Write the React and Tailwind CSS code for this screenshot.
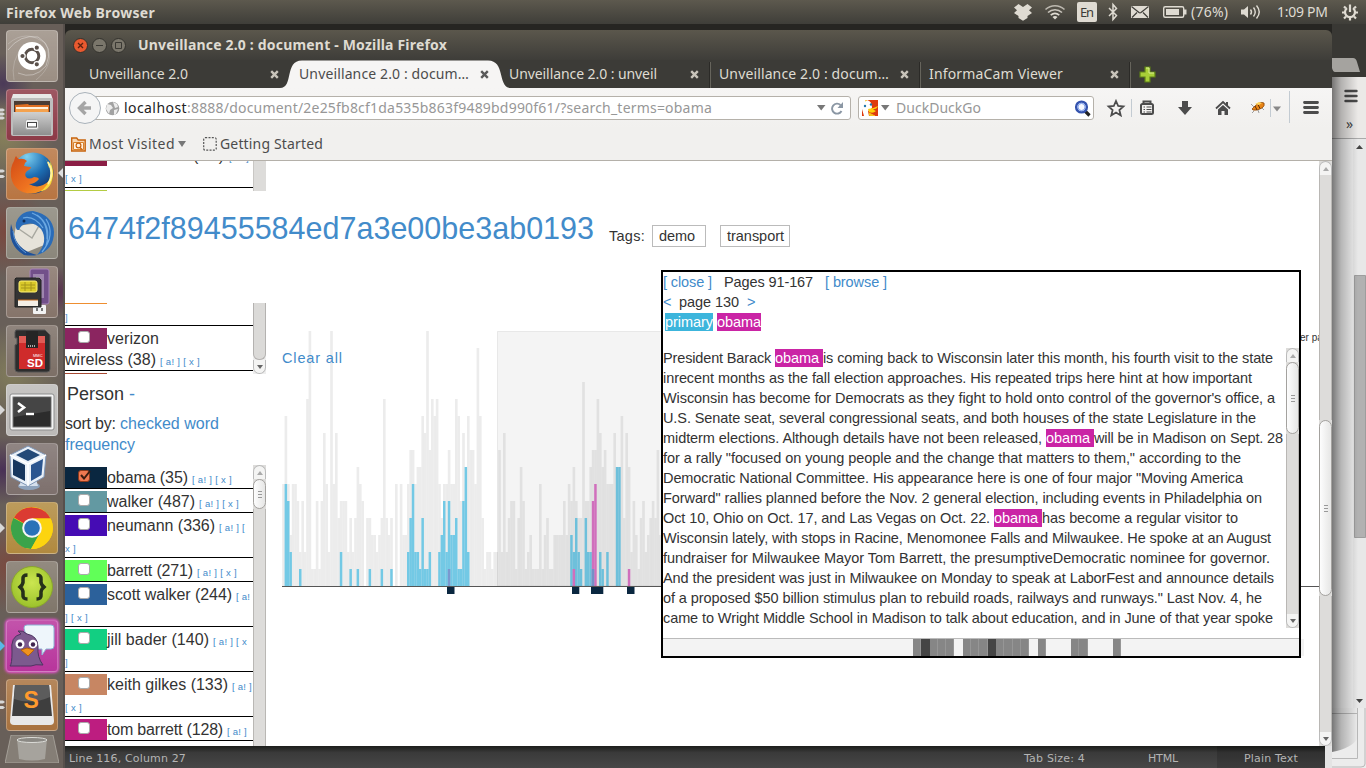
import React, { useLayoutEffect, useRef, useState } from "react";

/* Text run stretched or tightened to an exact advance width. */
function Fit({ w, className = "", children }) {
  const ref = useRef(null);
  const [ls, setLs] = useState(0);
  useLayoutEffect(() => {
    const natural = ref.current.getBoundingClientRect().width;
    setLs((w - natural) / children.length);
  }, []);
  return (
    <span ref={ref} className={"inline-block whitespace-pre " + className} style={{ letterSpacing: ls + "px" }}>
      {children}
    </span>
  );
}

/* ---------- top panel ---------- */
function TopPanel() {
  return (
    <header className="flex h-6 w-full shrink-0 items-center bg-linear-to-b from-[#5d594e] to-[#3f3e39] font-['Noto_Sans','Open_Sans',sans-serif] text-[#dfdbd2]">
      <div className="w-[1013px] pl-[6px] leading-6">
        <Fit w={149} className="text-[14px] font-bold">Firefox Web Browser</Fit>
      </div>
      <svg width="353" height="24" viewBox="1013 0 353 24" fill="#dfdbd2" className="font-['Noto_Sans',sans-serif] text-[14px]">
        <path d="M1018.500 4l4.500 3 4.500-3 4.500 3.500-3 2.700 3 2.800-4.500 3v2l-4.500 2.800-4.500-2.800v-2l-4.500-3 3-2.800-3-2.700z" />
        <g fill="none" stroke="#dfdbd2">
          <path d="M1045.500 9.500c5.500-5 13.500-5 19 0" strokeWidth="1.600" opacity=".75" />
          <path d="M1048 12.500c4-3.700 10-3.700 14 0" strokeWidth="1.600" opacity=".85" />
          <path d="M1050.700 15.200c2.500-2.200 6-2.200 8.600 0" strokeWidth="1.600" />
          <path d="M1109 8l7.500 7.500-3.500 4V4.500l3.500 4-7.500 7.500" strokeWidth="1.500" />
        </g>
        <path d="M1052.500 17c1.500-1.500 3.500-1.500 5 0l-2.500 2.500z" />
        <rect x="1077" y="2" width="20" height="20" rx="2" />
        <text x="1080" y="17" fontSize="13" fill="#3c3b37" textLength="14">En</text>
        <rect x="1131" y="6" width="18" height="12" />
        <path d="M1131.500 6.500l7.500 6q1 .7 2 0l7.500-6M1132 17.500l5-5M1148 17.500l-5-5" fill="none" stroke="#3f3e39" strokeWidth="1.200" />
        <rect x="1163.700" y="6.700" width="20" height="10.600" rx="1.500" fill="none" stroke="#dfdbd2" strokeWidth="1.400" />
        <rect x="1166" y="9" width="13" height="6" />
        <path d="M1184 9.500h2.500v5h-2.500z" />
        <text x="1191" y="17" fontSize="14" textLength="37">(76%)</text>
        <path d="M1241 9.500h3l4-3.500v12l-4-3.500h-3z" />
        <path d="M1250.500 9.500q2 2.500 0 5M1253.500 7.500q3.500 4.500 0 9M1256.500 5.500q5.500 6.500 0 13" fill="none" stroke="#dfdbd2" strokeWidth="1.400" />
        <text x="1277" y="17" fontSize="14" textLength="51">1:09 PM</text>
        <path d="M1347 8.200a5 5 0 1 0 6 0" fill="none" stroke="#dfdbd2" strokeWidth="2.200" />
        <path d="M1350 4.500v7.500M1344 6.500l1.800 1.800M1356 6.500l-1.800 1.800M1342 12.500h3M1355 12.500h3M1344 18.500l2-2M1356 18.500l-2-2M1350 17.500v3" fill="none" stroke="#dfdbd2" strokeWidth="2.200" />
      </svg>
    </header>
  );
}

/* ---------- launcher ---------- */
function UbuntuIcon() {
  return (
    <g>
      <path d="M2 20Q14 4 32 7Q48 16 40 36Q28 50 12 43" fill="none" stroke="#fff" strokeOpacity=".35" strokeWidth="1" />
      <path d="M2 14Q20 -2 40 14Q50 34 30 50M8 50Q4 30 18 16" fill="none" stroke="#fff" strokeOpacity=".2" />
      <circle cx="26" cy="26" r="14" fill="#fff" />
      <circle cx="26" cy="26" r="6.800" fill="none" stroke="#5a504a" strokeWidth="3" />
      <g stroke="#fff" strokeWidth="1.200" fill="#5a504a">
        <circle cx="16.500" cy="26" r="2.700" />
        <circle cx="30.800" cy="17.700" r="2.700" />
        <circle cx="30.800" cy="34.300" r="2.700" />
      </g>
    </g>
  );
}
function FilesIcon() {
  return (
    <g>
      <path d="M7 5h38l2 6H5z" fill="#e8e8e8" />
      <rect x="5" y="9" width="42" height="38" rx="2" fill="#bdbdbd" />
      <rect x="8" y="12" width="36" height="11" fill="#4a3c35" />
      <path d="M9 16l13-1 1 1h20v7H9z" fill="#e06f22" />
      <path d="M10 18h32v4H10z" fill="#fff0dd" />
      <path d="M10 20h32v3H10z" fill="#f4a24e" />
      <path d="M7 23h38v23H7z" fill="url(#lgGrey)" />
      <rect x="19.500" y="30.500" width="13" height="10" rx="2" fill="#eee" stroke="#aaa" />
      <rect x="21.500" y="33.500" width="9" height="4.500" fill="#fff" stroke="#444" />
    </g>
  );
}
function FirefoxIcon() {
  return (
    <g>
      <circle cx="27" cy="25" r="20.500" fill="url(#lgSea)" />
      <path d="M38 9C49 20 46 38 31 43C44 46 52 28 44 13Q45 18 43 20Q42 13 38 9z" fill="#fbd83a" />
      <path d="M8 13Q9 9 10 8Q11 10 13 11Q18 10 21 13Q18 15 18 18Q22 19 25 19Q25 21 21 23Q18 26 20 29Q23 32 28 29Q32 29 33 31Q29 36 23 36Q33 42 43 33Q37 46 24 45.500Q8 44 5 29Q4 19 8 13z" fill="url(#lgFox)" />
      <path d="M42 14Q49 26 42 36" fill="none" stroke="#fff3a0" strokeWidth="2" />
    </g>
  );
}
function ThunderbirdIcon() {
  return (
    <g>
      <path d="M10 19l24-3 9 20-22 9-14-10z" fill="#e6e3da" />
      <path d="M10 20l16 11 8-14" fill="none" stroke="#a8a8a0" strokeWidth="1.500" />
      <path d="M10 16Q14 4 27 4Q47 8 48 25Q48 43 31 48Q43 34 35 22Q28 15 21 17Q15 17 13 23Q9 24 10 16z" fill="#2a6cb8" />
      <path d="M17 11Q28 8 37 21M31 8Q46 18 40 39M40 12Q50 28 36 45M26 6Q42 12 41 32" fill="none" stroke="#6ba8e2" strokeWidth="1.200" />
      <path d="M5 17Q1 38 18 48Q26 49 31 48Q14 44 9 31z" fill="#1f529b" />
      <path d="M7 24Q8 38 20 46" fill="none" stroke="#5e96d2" />
      <circle cx="18" cy="14" r="1.500" fill="#0f2c57" />
    </g>
  );
}
function SaveDrivesIcon() {
  return (
    <g>
      <rect x="24" y="3" width="19" height="35" rx="2" fill="#72508a" stroke="#a583b8" />
      <rect x="27" y="8" width="11" height="24" fill="#9e85ae" />
      <rect x="30" y="11" width="3" height="8" fill="#ddd" />
      <rect x="27" y="39" width="13" height="9" rx="1" fill="#f2f2f2" />
      <path d="M30 42h2v3h-2zM35 42h2v3h-2z" fill="#777" />
      <path d="M10 12h23l2 2v27H9V13z" fill="#343434" stroke="#222" />
      <rect x="13" y="15" width="18" height="11" rx="2" fill="#d9c92a" stroke="#fff176" />
      <path d="M15 19h14M15 22h14M19 16v9M25 16v9" stroke="#a6951b" />
      <rect x="12" y="34" width="20" height="6" fill="#f5efe6" />
      <path d="M12 34h20" stroke="#c66d21" />
    </g>
  );
}
function SdIcon() {
  return (
    <g>
      <path d="M10 5h29l5 5v34q0 3-3 3H12q-3 0-3-3V20l2-1v-6H9V7z" fill="#2d2d2d" stroke="#555" />
      <rect x="13" y="11" width="26" height="33" fill="#cf2b2b" />
      <path d="M13 11h7v7h-7zM32 11h7v7h-7z" fill="#df5b55" />
      <path d="M20 6h12v17H20z" fill="#252525" />
      <path d="M22 21h8" stroke="#aaa" strokeDasharray="1 1" strokeWidth="2" />
      <text x="27" y="32" fontSize="4" fill="#fff">MMC</text>
      <text x="21" y="42" fontSize="11.500" fontWeight="bold" fill="#fff">SD</text>
    </g>
  );
}
function TerminalIcon() {
  return (
    <g>
      <rect x="4" y="10" width="44" height="36" rx="2" fill="#f4f4f4" stroke="#8d8d8d" />
      <rect x="7" y="13" width="38" height="30" fill="#2c2c2c" stroke="#777" />
      <path d="M8 14h36v13L8 33z" fill="#454545" />
      <path d="M12 19l6 4.500-6 4.500" fill="none" stroke="#fff" strokeWidth="2.600" />
      <path d="M20 30h8" stroke="#fff" strokeWidth="2.400" />
    </g>
  );
}
function VirtualBoxIcon() {
  return (
    <g>
      <ellipse cx="23" cy="43" rx="11" ry="4" fill="#8ea3bc" />
      <path d="M16 36h14l2 7H13z" fill="#d6e0ec" />
      <path d="M22 3l18 9-2 22-16 9-17-9-1-22z" fill="#e9f0f8" stroke="#7d95b5" />
      <path d="M22 6l12 6-12 6-12-6z" fill="#244a78" />
      <path d="M7 16l12 6v16l-12-6z" fill="#17375f" />
      <path d="M25 22l12-6-1.500 16L25 38z" fill="#2b5690" />
      <path d="M4 12l18 9 18-9M22 21v22" fill="none" stroke="#fff" strokeWidth="1.500" />
    </g>
  );
}
function ChromeIcon() {
  return (
    <g>
      <circle cx="26" cy="26" r="21" fill="#fcd009" />
      <path d="M26 26L8 15.500A21 21 0 0 1 44.500 16.500H26z" fill="#db3b32" />
      <path d="M26 26L7.500 16A21 21 0 0 0 25 47l9-16z" fill="#3aa34a" />
      <path d="M26 16.500H44.500A21 21 0 0 1 25 47l9-16z" fill="#fcd40f" />
      <circle cx="26" cy="26" r="9.800" fill="#f5f5f5" />
      <circle cx="26" cy="26" r="7.800" fill="#2a72b8" />
    </g>
  );
}
function BracesIcon() {
  return (
    <g>
      <circle cx="26" cy="26" r="20.500" fill="url(#lgLime)" stroke="#8aa52d" />
      <path d="M21.500 14q-5 0-4.500 4t-1 6l-2 2 2 2q1.500 2 1 6t4.500 4M30.500 14q5 0 4.500 4t1 6l2 2-2 2q-1.500 2-1 6t-4.500 4" fill="none" stroke="#26301a" strokeWidth="3.600" />
    </g>
  );
}
function PidginIcon() {
  return (
    <g>
      <path d="M18 8q0-3 3-3h24q3 0 3 3v18q0 3-3 3h-5l-4 6 0-6H23z" fill="#eef6fb" stroke="#8cb6d6" />
      <path d="M4 46q2-2 2-14Q4 16 15 14l-3-3q5-1 9 3Q32 16 32 27q-1 10 5 18-8-1-12 1-10 0-21 0z" fill="#7c5a8e" stroke="#4d3561" />
      <circle cx="14" cy="24" r="4.500" fill="#fff" /><circle cx="27" cy="24" r="4.300" fill="#fff" />
      <circle cx="14" cy="24.500" r="2.200" fill="#40254f" /><circle cx="27" cy="24.500" r="2.200" fill="#40254f" />
      <path d="M15 30l6-2 7 2-6 6z" fill="#f0921e" stroke="#b5600d" />
    </g>
  );
}
function SublimeIcon() {
  return (
    <g>
      <path d="M7 6h38l3 36q0 4-4 4H8q-4 0-4-4z" fill="#e8e8e8" />
      <path d="M9 6h34l3 31H6z" fill="#3e3e3e" />
      <path d="M9 6h34l1 12Q26 26 8 20z" fill="#5c5c5c" />
      <text x="17.500" y="29" fontSize="23" fontWeight="bold" fill="#ff9a2e">S</text>
    </g>
  );
}

const LAUNCHER = [
  { Icon: UbuntuIcon, bg: "bg-[#9b8f84]" },
  { Icon: FilesIcon, bg: "bg-[#8d3a47]", pips: 3 },
  { Icon: FirefoxIcon, bg: "bg-[#b87542]", pips: 2, active: true },
  { Icon: ThunderbirdIcon, bg: "bg-[#8b877b]" },
  { Icon: SaveDrivesIcon, bg: "bg-[#86746a]" },
  { Icon: SdIcon, bg: "bg-[#7c6f66]" },
  { Icon: TerminalIcon, bg: "bg-[#bcbab8]", pips: 1 },
  { Icon: VirtualBoxIcon, bg: "bg-[#7d706d]" },
  { Icon: ChromeIcon, bg: "bg-[#b18a3f]", pips: 1 },
  { Icon: BracesIcon, bg: "bg-[#80766a]" },
  { Icon: PidginIcon, bg: "bg-[#b8359c] shadow-[0_0_3px_1px_#f050d8]", pips: 1, blue: true },
  { Icon: SublimeIcon, bg: "bg-[#a8723f]", pips: 2 },
];

function Launcher() {
  return (
    <nav className="relative flex h-[744px] w-[65px] shrink-0 flex-col items-center gap-[7px] overflow-hidden border-r-2 border-[#57504c] bg-[#685f59] bg-[radial-gradient(circle_at_5%_8%,#4b3a58_0,transparent_30px),radial-gradient(circle_at_8%_15%,#87805a_0,transparent_50px),radial-gradient(circle_at_10%_28%,#79483f_0,transparent_45px),radial-gradient(circle_at_90%_36%,#58304f_0,transparent_26px),radial-gradient(circle_at_20%_47%,#817c5b_0,transparent_50px),radial-gradient(circle_at_5%_60%,#493056_0,transparent_34px),radial-gradient(circle_at_15%_73%,#7a4a3f_0,transparent_46px),radial-gradient(circle_at_20%_89%,#81604b_0,transparent_45px)] pt-[6px]">
      <svg width="0" height="0" className="absolute">
        <defs>
          <linearGradient id="lgGrey" x1="0" y1="0" x2="0" y2="1"><stop offset="0" stopColor="#d0d0d0" /><stop offset="1" stopColor="#8e8e8e" /></linearGradient>
          <linearGradient id="lgFox" x1="0" y1="0" x2="1" y2="1"><stop offset="0" stopColor="#d14a16" /><stop offset=".6" stopColor="#ee7220" /><stop offset="1" stopColor="#f7a427" /></linearGradient>
          <radialGradient id="lgSea" cx=".35" cy=".1" r=".8"><stop offset="0" stopColor="#7ed0f0" /><stop offset=".6" stopColor="#1d6fb4" /><stop offset="1" stopColor="#153f7d" /></radialGradient>
          <radialGradient id="lgLime" cx=".5" cy=".4" r=".6"><stop offset="0" stopColor="#cbe650" /><stop offset="1" stopColor="#9cc22b" /></radialGradient>
        </defs>
      </svg>
      {LAUNCHER.map(({ Icon, bg, pips = 0, active, blue }, i) => (
        <div key={i} className="relative flex h-[52px] w-full shrink-0 justify-center">
          <div className={"h-[52px] w-[52px] rounded-[4px] border border-white/25 bg-linear-to-b from-white/15 to-transparent " + bg}>
            <svg width="52" height="52" viewBox="0 0 52 52" className="-mt-px -ml-px font-['Liberation_Sans',sans-serif]"><Icon /></svg>
          </div>
          <svg width="6" height="24" viewBox="0 0 6 24" className="absolute top-[14px] left-0" fill={blue ? "#58b9e8" : "#d8d8d8"}>
            {pips === 1 && <path d="M0 7l5 5-5 5z" />}
            {pips === 2 && <path d="M0 7.500h3l2 1.500-2 1.500H0zM0 13h3l2 1.500-2 1.500H0z" />}
            {pips === 3 && <path d="M0 5.500h3l2 1.500-2 1.500H0zM0 9.500h3l2 1.500-2 1.500H0zM0 13.500h3l2 1.500-2 1.500H0z" />}
          </svg>
          {active && <svg width="5" height="10" className="absolute top-[20px] right-0" fill="#e0e0e0"><path d="M5 0v10L0 5z" /></svg>}
        </div>
      ))}
      <svg width="54" height="28" viewBox="0 0 54 28" className="-mt-[3px] ml-[1px] shrink-0">
        <path d="M6 0h42l6 28H0z" fill="#a8a49a" fillOpacity=".45" stroke="#c0bdb4" strokeOpacity=".6" />
        <path d="M12 4l2 20q13 3 26 0l2-20z" fill="#bdbdb8" fillOpacity=".6" />
        <ellipse cx="27" cy="5" rx="15" ry="2.500" fill="#8b8984" stroke="#dcdcd8" />
      </svg>
    </nav>
  );
}

/* ---------- browser chrome ---------- */
function TitleBar() {
  const ring = "flex h-[15px] w-[15px] items-center justify-center rounded-full border border-[#33322d]";
  return (
    <div className="flex h-[30px] items-center bg-linear-to-b from-[#5b574c] to-[#3e3d39] pl-[8px]">
      <div className="flex gap-[4px]">
        <div className={ring + " bg-[#e9592f]"}><svg width="7" height="7"><path d="M1 1l5 5M6 1l-5 5" stroke="#5c2210" strokeWidth="1.300" /></svg></div>
        <div className={ring + " bg-[#7a766b]"}><svg width="7" height="7"><path d="M0 3.500h7" stroke="#3a3934" /></svg></div>
        <div className={ring + " bg-[#7a766b]"}><svg width="7" height="7"><path d="M.5.500h6v6h-6z" fill="none" stroke="#3a3934" /></svg></div>
      </div>
      <div className="ml-[12px] text-[14px] leading-[28px] font-bold text-[#dfdbd2]"><Fit w={309}>Unveillance 2.0 : document - Mozilla Firefox</Fit></div>
    </div>
  );
}

const TABS = [
  { t: "Unveillance 2.0", w: 99 },
  { t: "Unveillance 2.0 : docum…", w: 170, on: true },
  { t: "Unveillance 2.0 : unveil", w: 148, sep: true },
  { t: "Unveillance 2.0 : docum…", w: 170, sep: true },
  { t: "InformaCam Viewer", w: 134, sep: true },
];
function TabStrip() {
  return (
    <div className="flex h-[28px] items-center bg-[#3c3b37] pl-[14px]">
      {TABS.map((tab, i) => (
        <div key={i} className="relative flex h-[28px] w-[210px] items-center justify-between pr-[10px] pl-[10px]">
          {tab.on && (
            <svg width="234" height="28" viewBox="0 0 234 28" className="absolute top-0 left-[-10px]">
              <path d="M1 28C15 28 5 .500 23 .500H209C227 .500 218 28 232 28z" fill="#f6f5f4" />
            </svg>
          )}
          <span className={"relative text-[14px] leading-[28px] " + (tab.on ? "text-[#4c4c4c]" : "text-[#dfdbd2]")}><Fit w={tab.w}>{tab.t}</Fit></span>
          <svg width="9" height="9" className="relative"><path d="M1.200 1.200l6.600 6.600M7.800 1.200l-6.600 6.600" stroke={tab.on ? "#5a5a5a" : "#c8c4ba"} strokeWidth="2.400" /></svg>
          {tab.sep && <div className="absolute top-[2px] right-[-2px] h-[26px] w-[2px] border-x border-l-[#2b2a27] border-r-[#66645c]" />}
        </div>
      ))}
      <svg width="17" height="17" viewBox="0 0 17 17" className="ml-[10px]"><path d="M6 1h5v5h5v5h-5v5H6v-5H1V6h5z" fill="#a8cf38" stroke="#5d8018" strokeWidth="1.200" /><path d="M7 2h3v5h5" fill="none" stroke="#d9ee8f" /></svg>
    </div>
  );
}

function NavBar() {
  return (
    <div className="flex h-[40px] items-center bg-linear-to-b from-[#f6f5f4] to-[#f1f0ee]">
      <div className="z-10 ml-[4px] flex h-[32px] w-[32px] items-center justify-center rounded-full border border-[#a9b2ba] bg-[#f5f5f5]">
        <svg width="16" height="16" viewBox="0 0 16 16"><path d="M14 8H3M8.500 2L2.500 8l6 6" fill="none" stroke="#a5a5a5" strokeWidth="3.400" /></svg>
      </div>
      <div className="ml-[-14px] flex h-[24px] w-[764px] items-center rounded-r-[3px] border border-[#b5b1aa] bg-white pr-[5px] pl-[17px]">
        <svg width="15" height="15" viewBox="0 0 15 15"><circle cx="7.500" cy="7.500" r="6.800" fill="#a2a2a2" /><path d="M2 3l4 1 2 3-3 2-1 4-3-5zM8 1l4 2 1 3-3 1zM9 9l4-1-2 5-2 1z" fill="#ececec" /></svg>
        <div className="ml-[4px] flex w-[690px] text-[14px] leading-[22px]">
          <Fit w={63} className="text-[#222]">localhost</Fit>
          <Fit w={525} className="text-[#979797]">:8888/document/2e25fb8cf1da535b863f9489bd990f61/?search_terms=obama</Fit>
        </div>
        <svg width="9" height="6" className="ml-auto"><path d="M0 0h8.500L4.200 5.500z" fill="#777" /></svg>
        <svg width="13" height="13" viewBox="0 0 13 13" className="ml-[5px] mr-px"><path d="M10.500 9A5 5 0 1 1 9.500 3" fill="none" stroke="#8b97a4" strokeWidth="1.900" /><path d="M12 0v6H6.500z" fill="#8b97a4" /></svg>
      </div>
      <div className="ml-[7px] flex h-[24px] w-[236px] items-center rounded-[3px] border border-[#b5b1aa] bg-white pr-[2px] pl-[3px]">
        <svg width="16" height="16" viewBox="0 0 16 16"><path d="M0 0h16v16H0z" fill="#de3a0e" /><path d="M0 0h5q5 1 5 8l-4 3 1 5H2L0 9z" fill="#fff" /><path d="M6 9q5 0 10-3-1 3-5 3.500l3 1.500q-3 3-7 1z" fill="#fdd20a" /><circle cx="3" cy="6" r="1.200" fill="#2277aa" /><circle cx="9" cy="4.500" r="1.200" fill="#2277aa" /><path d="M3 1l2-1M7 13l1 3h5z" stroke="#f7c21c" fill="#f7c21c" /></svg>
        <svg width="9" height="6" className="ml-[3px]"><path d="M0 0h8.500L4.200 5.500z" fill="#777" /></svg>
        <span className="ml-[6px] text-[14px] leading-[22px] text-[#979797]"><Fit w={85}>DuckDuckGo</Fit></span>
        <svg width="17" height="17" viewBox="0 0 17 17" className="ml-auto"><path d="M11 11l4.500 4.500" stroke="#222" strokeWidth="3.200" /><circle cx="7.500" cy="7" r="5.400" fill="#dfe9ff" stroke="#3453ae" strokeWidth="2.400" /><circle cx="7.500" cy="7" r="3.600" fill="#f5f8ff" stroke="#7a9be8" /></svg>
      </div>
      <svg width="237" height="40" viewBox="1094 88 237 40" className="shrink-0">
        <path d="M1116 101l2.200 5 5.200.500-4 3.600 1.300 5.300-4.700-2.900-4.700 2.900 1.300-5.300-4-3.600 5.200-.500z" fill="none" stroke="#4c4c4c" strokeWidth="1.800" />
        <path d="M1131.500 99v18M1270.500 99v18M1289.500 91v32" stroke="#c3cbd2" />
        <rect x="1141" y="104" width="12" height="10" rx="1.500" fill="none" stroke="#4c4c4c" strokeWidth="2" />
        <path d="M1143.500 104v-2.500h7v2.500" fill="none" stroke="#4c4c4c" strokeWidth="2" />
        <path d="M1143.500 107h1.500M1146.500 107h5M1143.500 109.500h1.500M1146.500 109.500h5M1143.500 112h1.500M1146.500 112h5" stroke="#4c4c4c" strokeWidth="1" />
        <path d="M1182 101h6v6h4l-7 8-7-8h4z" fill="#4c4c4c" />
        <path d="M1216 108.500l7-6.500 7 6.500" fill="none" stroke="#4c4c4c" strokeWidth="1.800" />
        <path d="M1218 109.500l5-4.500 5 4.500v5.500h-3.500v-4h-3v4h-3.500zM1226 102h2v4h-2z" fill="#4c4c4c" />
        <path d="M1252 109l3-3q5-5 9-3 1 3-2 5-5 3-9 2z" fill="#e88415" stroke="#8a4508" strokeWidth=".8" />
        <path d="M1255 106l2 4M1258 104.500l2 4" stroke="#5b2a05" />
        <path d="M1255 104l4-2 3 1-3 2z" fill="#ffd45e" />
        <path d="M1251 104l3 3M1254 111l-2 2M1258 110l1 3M1262 108l2 2" stroke="#888" strokeWidth=".8" />
        <path d="M1273 106.500h8l-4 5z" fill="#888" />
        <path d="M1304.500 102.500h13M1304.500 107.500h13M1304.500 112.500h13" stroke="#4c4c4c" strokeWidth="2.800" strokeLinecap="round" />
      </svg>
    </div>
  );
}

function BookmarksBar() {
  return (
    <div className="flex h-[33px] items-center border-b border-[#b4b0a9] bg-[#f1f0ee] pl-[6px] text-[14px] leading-[32px] text-[#4c4c4c]">
      <svg width="15" height="15" viewBox="0 0 15 15"><path d="M.7 1h5l1.500 2h7v11H.700z" fill="#f6d5b0" stroke="#c8640e" strokeWidth="1.400" /><path d="M2.500 5.500h10v7h-10z" fill="#fff0df" stroke="#d9822b" /><circle cx="7.500" cy="8.500" r="2.400" fill="none" stroke="#c8640e" strokeWidth="1.200" /><path d="M9 10.500l2 2" stroke="#c8640e" strokeWidth="1.400" /></svg>
      <span className="ml-[3px]"><Fit w={86}>Most Visited</Fit></span>
      <svg width="8" height="6" className="ml-[3px]"><path d="M0 0h8L4 6z" fill="#777" /></svg>
      <svg width="14" height="14" className="ml-[17px]"><rect x=".7" y=".7" width="12.500" height="12.500" rx="1.500" fill="none" stroke="#555" strokeWidth="1.200" strokeDasharray="2 1.300" /></svg>
      <span className="ml-[3px]"><Fit w={103}>Getting Started</Fit></span>
    </div>
  );
}

/* ---------- scrollbars ---------- */
function Grip() {
  return <div className="flex flex-col gap-[2px]"><i className="h-px w-[4px] bg-[#999]" /><i className="h-px w-[4px] bg-[#999]" /><i className="h-px w-[4px] bg-[#999]" /></div>;
}
function Arrow({ up }) {
  return (
    <div className={"flex h-[14px] shrink-0 items-center justify-center border border-[#bbb] bg-[#f4f4f3] " + (up ? "rounded-t-[7px] border-b-0" : "rounded-b-[7px] border-t-0")}>
      <svg width="6" height="4"><path d={up ? "M0 4h6L3 0z" : "M0 0h6L3 4z"} fill={up ? "#aaa" : "#666"} /></svg>
    </div>
  );
}
function Thumb({ h }) {
  return <div className={"flex shrink-0 items-center justify-center rounded-[7px] border border-[#a4a29f] bg-linear-to-r from-[#fdfdfd] to-[#e6e6e5] " + h}><Grip /></div>;
}

/* ---------- word list ---------- */
function Row({ color, label, lw, small, smallW, wrap, wrapW, checked }) {
  return (
    <div className="border-b border-black pt-[2px]">
      <div className="flex h-[21px] items-start text-[16px] leading-[21px] text-[#333]">
        <div className={"flex h-[21px] w-[42px] shrink-0 justify-center pt-[3px] pr-[4px] " + color}>
          <div className={"h-[12px] w-[12px] rounded-[3px] border " + (checked ? "border-[#8a3a1c] bg-[#ef7850]" : "border-[#aaa] bg-white")}>
            {checked && <svg width="12" height="10" className="-mt-px"><path d="M2 5l3 3.500 6-7.500" fill="none" stroke="#3a1c10" strokeWidth="2" /></svg>}
          </div>
        </div>
        <Fit w={lw}>{label}</Fit>
        {small && <span className="ml-[4px] text-[9.500px] leading-[26px] text-[#428bca]"><Fit w={smallW}>{small}</Fit></span>}
      </div>
      {wrap && <div className="h-[21px] text-[9.500px] leading-[26px] text-[#428bca]"><Fit w={wrapW}>{wrap}</Fit></div>}
    </div>
  );
}
const PEOPLE = [
  { color: "bg-[#0a2740]", label: "obama (35)", lw: 81, small: "[ a! ] [ x ]", smallW: 40, checked: true },
  { color: "bg-[#6399a2]", label: "walker (487)", lw: 88, small: "[ a! ] [ x ]", smallW: 40 },
  { color: "bg-[#450cb4]", label: "neumann (336)", lw: 108, small: "[ a! ] [", smallW: 26, wrap: "x ]", wrapW: 11 },
  { color: "bg-[#61ff58]", label: "barrett (271)", lw: 86, small: "[ a! ] [ x ]", smallW: 40 },
  { color: "bg-[#2c619b]", label: "scott walker (244)", lw: 125, small: "[ a!", smallW: 14, wrap: "] [ x ]", wrapW: 23 },
  { color: "bg-[#12cf82]", label: "jill bader (140)", lw: 102, small: "[ a! ] [ x", smallW: 34, wrap: "]", wrapW: 3 },
  { color: "bg-[#c78663]", label: "keith gilkes (133)", lw: 121, small: "[ a! ]", smallW: 20, wrap: "[ x ]", wrapW: 17 },
  { color: "bg-[#bd1d80]", label: "tom barrett (128)", lw: 116, small: "[ a! ]", smallW: 20 },
];

function TopListPiece() {
  return (
    <div className="flex h-[30px] w-[201px] overflow-hidden">
      <div className="-mt-[18px] h-[48px] w-[188px]">
        <Row color="bg-[#8b1e45]" label="verizon llc (39)" lw={118} small="[ a! ]" smallW={20} wrap="[ x ]" wrapW={17} />
        <div className="mt-[2px] h-px w-[42px] bg-[#b4cc43]" />
      </div>
      <div className="h-[30px] w-[13px] border-l border-[#c9c7c4] bg-[#dddcda]" />
    </div>
  );
}

function Sidebar() {
  return (
    <aside className="flex h-[443px] w-[201px] shrink-0 flex-col">
      <div className="flex h-[71px] w-full">
        <div className="w-[188px]">
          <div className="h-px w-[42px] bg-[#ee8e30]" />
          <div className="h-[22px] border-b border-black text-[9.500px] leading-[28px] text-[#428bca]">]</div>
          <div className="border-b border-black pt-[2px] text-[16px] leading-[21px] text-[#333]">
            <div className="flex">
              <div className="flex h-[21px] w-[42px] justify-center bg-[#8b2560] pt-[3px] pr-[4px]"><div className="h-[12px] w-[12px] rounded-[3px] border border-[#aaa] bg-white" /></div>
              <Fit w={52}>verizon</Fit>
            </div>
            <div className="flex h-[21px]"><Fit w={91}>wireless (38)</Fit><span className="ml-[4px] text-[9.500px] leading-[26px] text-[#428bca]"><Fit w={40}>[ a! ] [ x ]</Fit></span></div>
          </div>
          <div className="mt-[2px] h-px w-[42px] bg-[#a84a33]" />
        </div>
        <div className="flex w-[13px] flex-col bg-[#eee]">
          <div className="h-[57px] rounded-b-[6px] border border-t-0 border-[#b4b2b0] bg-[#dbdad8]" />
          <Arrow />
        </div>
      </div>
      <div className="mt-[8px] h-[24px] pl-[2px] text-[18px] leading-[24px] text-[#333]"><Fit w={57}>Person</Fit><span className="ml-[5px] text-[#428bca]">-</span></div>
      <div className="mt-[7px] h-[53px] text-[16px] leading-[21px] text-[#333]">
        <div><Fit w={55}>sort by: </Fit><Fit w={99} className="text-[#428bca]">checked word</Fit></div>
        <div><Fit w={70} className="text-[#428bca]">frequency</Fit></div>
      </div>
      <div className="-mt-[1px] flex h-[281px] w-full overflow-hidden">
        <div className="w-[188px]">
          {PEOPLE.map((p) => <Row key={p.label} {...p} />)}
        </div>
        <div className="flex w-[13px] flex-col bg-[#dddcda]"><Arrow up /><Thumb h="h-[30px]" /><div className="flex-1 border-x border-[#b9b7b4]" /></div>
      </div>
    </aside>
  );
}

/* ---------- histogram ---------- */
const GREY = [
  6,10,6,3,6,6,5,2,5,2,11,15,1,1,5,1,5,9,6,2,15,6,9,4,5,5,5,2,4,2,4,7,6,5,0,4,4,3,3,2,3,4,11,4,3,4,0,6,0,6,3,3,6,8,8,6,7,7,10,9,15,8,11,10,11,6,4,6,6,8,6,6,11,10,5,9,6,10,8,8,
  6,14,10,4,1,2,2,1,2,2,8,2,9,2,4,5,5,1,4,7,5,1,2,3,1,1,1,6,1,3,4,1,1,3,3,3,3,5,3,6,5,7,5,4,4,12,5,5,7,8,8,11,9,7,8,6,6,6,9,7,7,10,4,9,7,2,5,3,1,4,5,2,3,4,5,4,8,3,
];
const BLUE = { 1:6,2:5,3:2,7:1,24:2,28:1,31:1,36:1,41:1,45:1,52:2,53:4,54:6,55:2,56:2,57:1,58:4,59:1,60:1,61:2,65:2,66:3,67:5,68:2,69:5,70:3,71:3,72:4,73:1,74:1,75:5,76:7,77:2,120:3,121:2,122:4,123:2,124:1,126:4,127:2,128:2,132:2,133:1,135:2,139:7,140:7 };
const PINK = { 121:1,129:5,130:6,144:1 };
const bx = (i) => 282.200 + i * 2.400;
const by = (v) => 586 - v * 17;
function Histogram() {
  return (
    <svg width="1053" height="320" viewBox="266 303 1053 320" className="shrink-0 font-['Liberation_Sans',Arial,sans-serif]">
      {GREY.map((v, i) => <rect key={i} x={bx(i)} y={by(v)} width="2.600" height={v * 17} fill="#ececec" />)}
      <text x="282" y="363" fontSize="14.500" fill="#428bca" textLength="60">Clear all</text>
      {Object.entries(BLUE).map(([i, v]) => <rect key={i} x={bx(+i)} y={by(v)} width="2.500" height={v * 17} fill="#73c9e5" />)}
      {Object.entries(PINK).map(([i, v]) => <rect key={i} x={bx(+i)} y={by(v)} width="2.500" height={v * 17} fill="#da74c5" />)}
      <rect x={bx(69)} y="569" width="2.500" height="17" fill="#7b98cf" />
      <rect x={bx(129)} y="569" width="2.500" height="17" fill="#7b98cf" />
      <rect x="497.500" y="331.500" width="200" height="254.500" fill="#000" fillOpacity=".045" stroke="#000" strokeOpacity=".07" />
      <path d="M282 586.500H1319" stroke="#555" />
      <path d="M447 587h7.500v7h-7.500zM572 587h7.300v7H572zM591 587h12.300v7H591zM627 587h7.500v7H627z" fill="#0a2740" />
      <text x="1300" y="341" fontSize="10" fill="#333">er page</text>
    </svg>
  );
}

/* ---------- page reader ---------- */
const LINES = [
  [["President Barack ", 112], ["obama ", 48, 1], ["is coming back to Wisconsin later this month, his fourth visit to the state", 450]],
  [["inrecent months as the fall election approaches. His repeated trips here hint at how important", 589]],
  [["Wisconsin has become for Democrats as they fight to hold onto control of the governor's office, a", 612]],
  [["U.S. Senate seat, several congressional seats, and both houses of the state Legislature in the", 593]],
  [["midterm elections. Although details have not been released, ", 383], ["obama ", 48, 1], ["will be in Madison on Sept. 28", 189]],
  [["for a rally \"focused on young people and the change that matters to them,\" according to the", 578]],
  [["Democratic National Committee. His appearance here is one of four major \"Moving America", 580]],
  [["Forward\" rallies planned before the Nov. 2 general election, including events in Philadelphia on", 599]],
  [["Oct 10, Ohio on Oct. 17, and Las Vegas on Oct. 22. ", 331], ["obama ", 48, 1], ["has become a regular visitor to", 196]],
  [["Wisconsin lately, with stops in Racine, Menomonee Falls and Milwaukee. He spoke at an August", 608]],
  [["fundraiser for Milwaukee Mayor Tom Barrett, the presumptiveDemocratic nominee for governor.", 607]],
  [["And the president was just in Milwaukee on Monday to speak at LaborFest and announce details", 611]],
  [["of a proposed $50 billion stimulus plan to rebuild roads, railways and runways.\" Last Nov. 4, he", 599]],
  [["came to Wright Middle School in Madison to talk about education, and in June of that year spoke", 610]],
];
const HIT = [30, 32, 33, 34, 36, 37, 38, 40, 41, 42, 43, 45, 49, 50, 54];
const HOT = [31, 39];

function Reader() {
  return (
    <section className="absolute top-[109px] left-[596px] flex h-[388px] w-[640px] flex-col border-2 border-black bg-white text-[14.500px] leading-[20px] text-[#333]">
      <div className="flex h-[20px]">
        <Fit w={49} className="text-[#428bca]">[ close ]</Fit>
        <Fit w={89} className="ml-[12px]">Pages 91-167</Fit>
        <Fit w={62} className="ml-[12px] text-[#428bca]">[ browse ]</Fit>
      </div>
      <div className="flex h-[20px]">
        <span className="w-[16px] text-[#428bca]">&lt;</span>
        <Fit w={60}>page 130</Fit>
        <span className="ml-[8px] text-[#428bca]">&gt;</span>
      </div>
      <div className="flex h-[20px] gap-[4px] pt-[1px] pl-[2px] leading-[18px] text-white">
        <div className="h-[18px] bg-[#3cb5dc]"><Fit w={48}>primary</Fit></div>
        <div className="h-[18px] bg-[#ca24a5]"><Fit w={44}>obama</Fit></div>
      </div>
      <div className="mt-[16px] flex h-[280px] justify-between">
        <div className="w-[622px]">
          {LINES.map((line, i) => (
            <div key={i} className="flex h-[20px]">
              {line.map(([t, w, hl], j) => (
                <Fit key={j} w={w} className={hl ? "mt-px h-[18px] bg-[#ca24a5] leading-[18px] text-white" : ""}>{t}</Fit>
              ))}
            </div>
          ))}
        </div>
        <div className="flex w-[13px] flex-col bg-[#dddcda]">
          <Arrow up /><Thumb h="h-[72px]" /><div className="flex-1 border-x border-[#b9b7b4]" /><Arrow />
        </div>
      </div>
      <div className="mt-[10px] h-[18px] w-[636px] border-t border-[#bbb]">
        <div className="flex">
          {Array.from({ length: 77 }, (_, i) => (
            <div key={i} className={"h-[17px] w-[8.330px] shrink-0 " + (HOT.includes(i) ? "bg-[#454545]" : HIT.includes(i) ? "border-r border-[#969696] bg-[#868686]" : i === 76 ? "bg-black/5" : "bg-[#f3f3f3]")} />
          ))}
        </div>
      </div>
    </section>
  );
}

function Tag({ w, children, tw }) {
  return <div className={"flex h-[22px] items-center border border-[#bbb] pl-[6px] leading-[20px] " + w}><Fit w={tw}>{children}</Fit></div>;
}

function Page() {
  return (
    <div className="relative flex h-[585px] bg-white font-['Liberation_Sans',Arial,sans-serif]">
      <main className="h-[585px] w-[1254px] overflow-hidden">
        <TopListPiece />
        <div className="flex h-[112px] pl-[3px] text-[14.500px] text-[#333]">
          <h1 className="mt-[20px] text-[30.500px] leading-[34px] text-[#428bca]"><Fit w={526}>6474f2f89455584ed7a3e00be3ab0193</Fit></h1>
          <div className="mt-[34px] ml-[15px] flex h-[22px] items-center">
            <Fit w={36} className="pt-[2px]">Tags:</Fit>
            <div className="ml-[7px] flex gap-[14px]"><Tag w="w-[54px]" tw={36}>demo</Tag><Tag w="w-[70px]" tw={57}>transport</Tag></div>
          </div>
        </div>
        <div className="flex h-[443px]"><Sidebar /><Histogram /></div>
      </main>
      <div className="flex w-[13px] flex-col bg-[#dddcda]">
        <Arrow up />
        <div className="h-[245px] border-x border-[#b9b7b4]" />
        <Thumb h="h-[176px]" />
        <div className="flex-1 border-x border-[#b9b7b4]" />
        <Arrow />
      </div>
      <Reader />
    </div>
  );
}

/* ---------- windows behind ---------- */
function StatusBar() {
  return (
    <footer className="flex h-[22px] w-[1260px] items-center bg-linear-to-b from-[#1c1e1b] via-[#3a3a3a] via-30% to-[#474747] font-['DejaVu_Sans',sans-serif] text-[11px] leading-[22px] text-[#b4b4b4]">
      <span className="w-[955px] pt-[3px] pl-[4px]"><Fit w={117}>Line 116, Column 27</Fit></span>
      <span className="w-[124px] pt-[3px] pl-[4px]"><Fit w={61}>Tab Size: 4</Fit></span>
      <span className="w-[73px] pt-[3px] pl-[4px]"><Fit w={30}>HTML</Fit></span>
      <span className="h-full flex-1 bg-black/15 pt-[2px] pl-[27px]"><Fit w={54}>Plain Text</Fit></span>
    </footer>
  );
}

function BackWindow() {
  return (
    <svg width="34" height="744" viewBox="1332 24 34 744" className="shrink-0">
      <defs>
        <linearGradient id="shade" x1="0" x2="1"><stop offset="0" stopOpacity=".5" /><stop offset=".35" stopOpacity=".24" /><stop offset="1" stopOpacity="0" /></linearGradient>
      </defs>
      <path d="M1332 24h34v53h-34z" fill="#393834" />
      <path d="M1332 58h21q3 0 4 4l3 10h-25q-2 0-3-4z" fill="#a5a39f" />
      <path d="M1332 77h34v61h-34z" fill="#ebe9e7" />
      <path d="M1332 138h34v570h-34z" fill="#f0f0f0" />
      <path d="M1332 138.500h34" stroke="#aaa" />
      <path d="M1353 139h13v569h-13z" fill="#e8e8e8" />
      <path d="M1354.500 275.500h11v262h-11z" fill="#b1b1b1" stroke="#9d9d9d" />
      <path d="M1356 149h7l-3.500-4zM1356 699h7l-3.500 4z" fill="#444" />
      <path d="M1345.500 91h11M1345.500 96h11M1345.500 101h11" stroke="#4a4a4a" strokeWidth="2.400" strokeLinecap="round" />
      <text x="1346" y="129" fontSize="14" fill="#444" className="font-['Noto_Sans',sans-serif]">»</text>
      <path d="M1332 708h34v60h-34z" fill="#ececec" />
      <path d="M1332 713.500h25M1357.500 708v50.500H1332M1365 708v56q0 3-4 3h-29" fill="none" stroke="#b8b8b8" />
      <path d="M1332 77h26v631h-26z" fill="url(#shade)" />
      <path d="M1332 708h26v30q-6 10-26 14z" fill="url(#shade)" />
    </svg>
  );
}

export default function App() {
  return (
    <div className="flex h-[768px] w-[1366px] flex-col overflow-hidden bg-[#2a2926]">
      <TopPanel />
      <div className="flex h-[744px]">
        <Launcher />
        <div className="flex h-[744px] w-[1267px] shrink-0 flex-col bg-[#e4e4e4]">
          <div className="bg-[#262522] pt-[6px]">
            <div className="overflow-hidden rounded-t-[6px] font-['Noto_Sans','Open_Sans',sans-serif]">
              <TitleBar />
              <TabStrip />
              <NavBar />
              <BookmarksBar />
            </div>
          </div>
          <Page />
          <StatusBar />
        </div>
        <BackWindow />
      </div>
    </div>
  );
}
